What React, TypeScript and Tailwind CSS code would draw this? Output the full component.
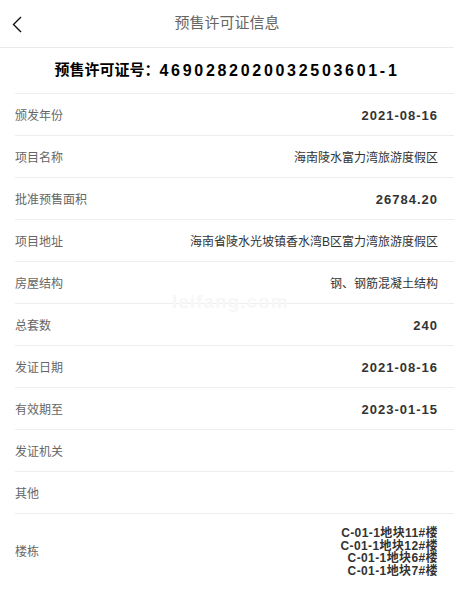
import React from 'react';

const CJK = "font-['Liberation_Sans','Noto_Sans_CJK_SC',sans-serif]";

type Row = { label: string; value?: string; bold?: boolean };

const rows: Row[] = [
  { label: '颁发年份', value: '2021-08-16', bold: true },
  { label: '项目名称', value: '海南陵水富力湾旅游度假区' },
  { label: '批准预售面积', value: '26784.20', bold: true },
  { label: '项目地址', value: '海南省陵水光坡镇香水湾B区富力湾旅游度假区' },
  { label: '房屋结构', value: '钢、钢筋混凝土结构' },
  { label: '总套数', value: '240', bold: true },
  { label: '发证日期', value: '2021-08-16', bold: true },
  { label: '有效期至', value: '2023-01-15', bold: true },
  { label: '发证机关' },
  { label: '其他' },
];

const buildings = ['C-01-1地块11#楼', 'C-01-1地块12#楼', 'C-01-1地块6#楼', 'C-01-1地块7#楼'];

export default function App() {
  return (
    <div className={`w-[454px] h-[592px] bg-white overflow-hidden relative ${CJK}`}>
      {/* Navbar */}
      <div className="h-12 border-b border-[#ebebeb] flex items-center justify-center relative">
        <svg className="absolute left-[11px] top-[15px]" width="14" height="19" viewBox="0 0 14 19" fill="none">
          <polyline points="10,2 2.5,9.5 10,17" stroke="#111" strokeWidth="1.4" />
        </svg>
        <span className="text-[15px] text-[#666]">预售许可证信息</span>
      </div>

      {/* License number */}
      <div className="ml-[15px] h-[46px] border-b border-[#eeeeee] flex items-center justify-center pr-[15px]">
        <span className="text-[15px] font-bold text-black">预售许可证号：</span>
        <span className="text-[16px] font-bold text-black tracking-[2.7px]">4690282020032503601-1</span>
      </div>

      {/* Info rows */}
      {rows.map((r, i) => (
        <div key={i} className="ml-[15px] h-[42px] border-b border-[#eeeeee] flex items-center justify-between pr-[16px]">
          <span className="text-[12px] text-[#666] pt-[2px]">{r.label}</span>
          {r.value && (
            <span className={r.bold ? 'text-[13px] font-bold text-[#333] tracking-[1px] pt-[2px]' : 'text-[12px] text-[#333] pt-[2px]'}>
              {r.value}
            </span>
          )}
        </div>
      ))}

      <div className="ml-[15px] pt-[13px] pb-3 flex items-center justify-between pr-[16px]">
        <span className="text-[12px] text-[#666]">楼栋</span>
        <div className="flex flex-col items-end">
          {buildings.map((b) => (
            <span key={b} className="text-[12px] font-bold text-[#333] leading-[12.5px] tracking-[0.4px]">{b}</span>
          ))}
        </div>
      </div>

      {/* watermark */}
      <span className="absolute left-[172px] top-[288px] text-[19px] font-bold text-[#f7f7f7] tracking-[1px]">leifang.com</span>
    </div>
  );
}
